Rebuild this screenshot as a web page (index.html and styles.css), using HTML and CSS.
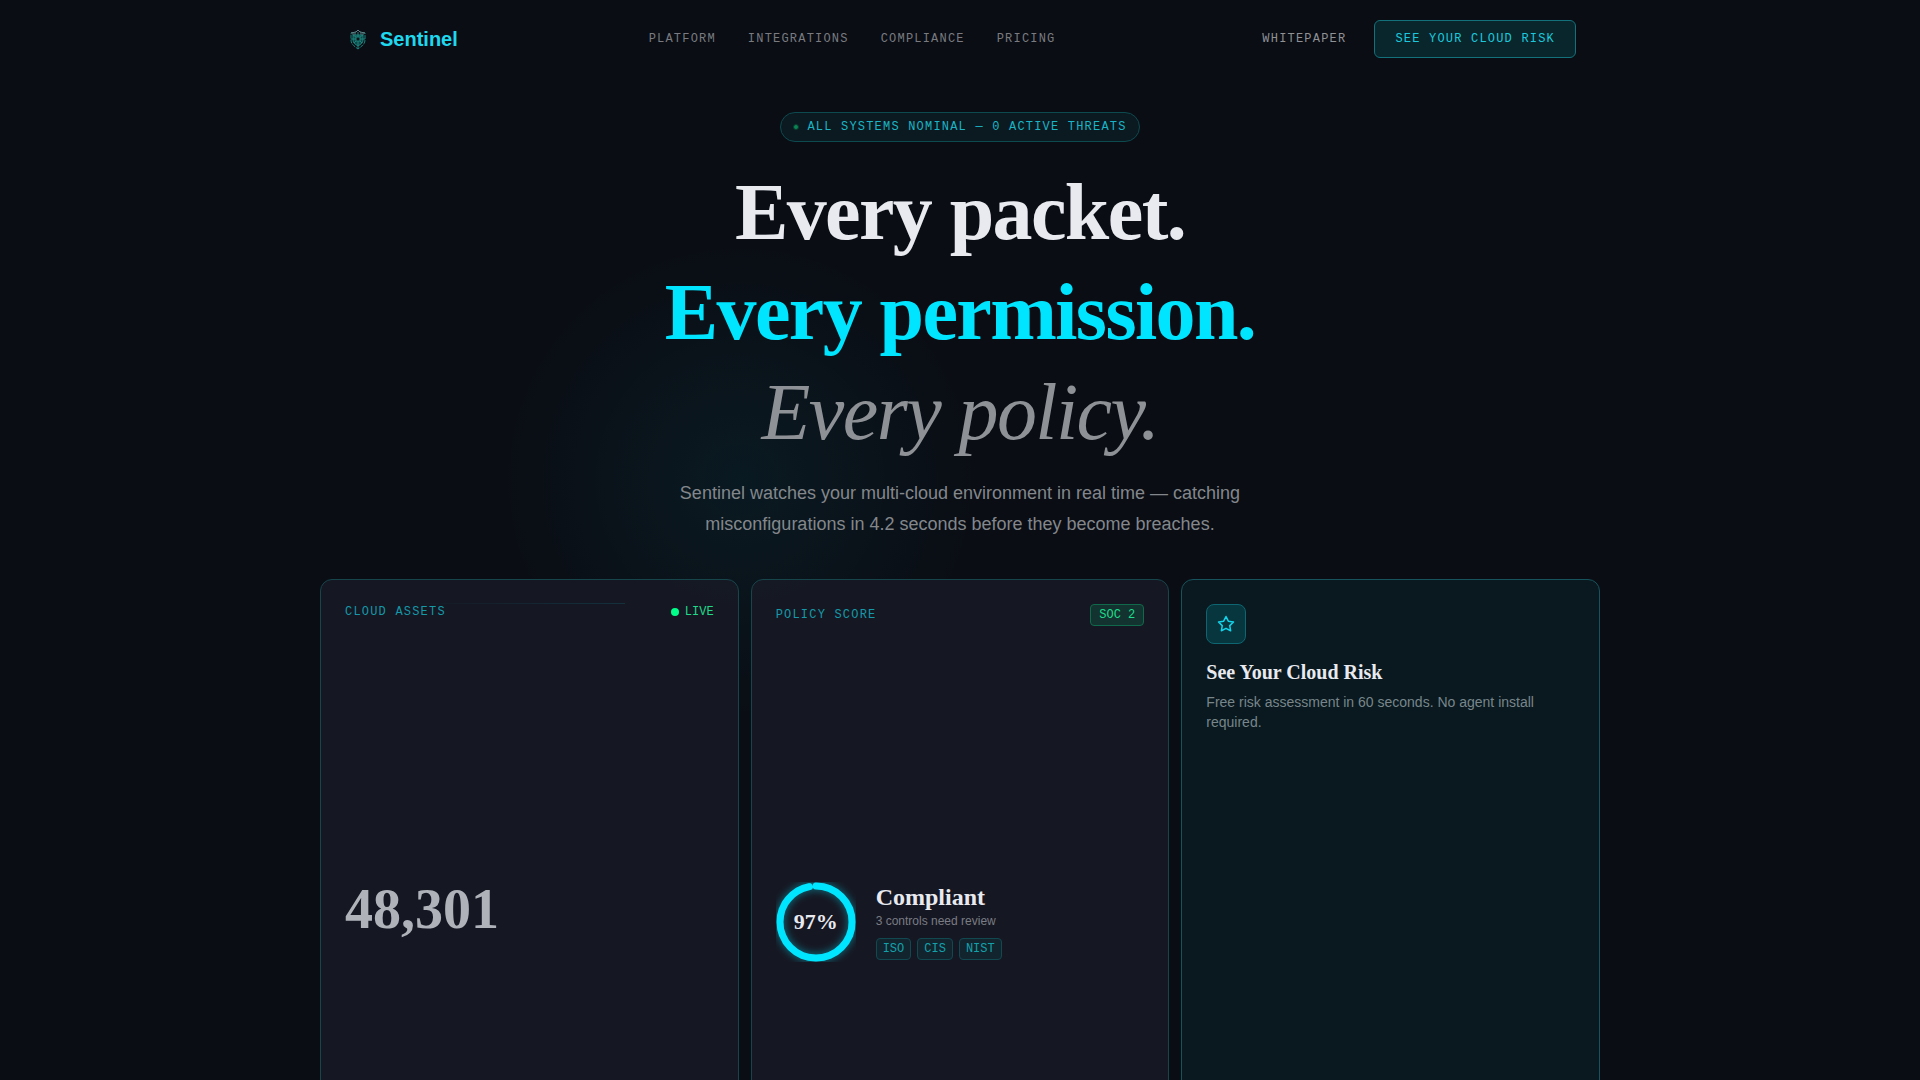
FILE: index.html
```html
<!DOCTYPE html>
<html lang="en">

<head>
  <meta charset="utf-8">
  <meta name="viewport" content="width=device-width, initial-scale=1">
  <title>Sentinel</title>
  <link rel="stylesheet" href="styles.css">
</head>

<body>
  <div class="glow"></div>

  <header class="nav">
    <a class="logo" href="#">
      <svg width="28" height="28" viewBox="0 0 28 28" fill="none" stroke="#1c857f" stroke-width="1">
        <path d="M14 5l2 2 5 1v7c0 4-3 6-7 9-4-3-7-5-7-9V8l5-1z" stroke-dasharray="4 1" />
        <path d="M7 8l5-1 2-2 2 2 5 1M8 9h4M16 9h4" stroke="#5f7d82" />
        <path d="M9 10h10v5c0 3-2 4-5 6-3-2-5-3-5-6z" fill="#0e4a4a" />
        <path d="M12 12h4v4h-4z" fill="#0a1218" />
        <path d="M14 7v5M14 16v7M7 14h5M16 14h5M9 10l3 2M19 10l-3 2M10 18l2-2M18 18l-2-2" />
      </svg>
      <span>Sentinel</span>
    </a>
    <nav class="links">
      <a href="#">PLATFORM</a>
      <a href="#">INTEGRATIONS</a>
      <a href="#">COMPLIANCE</a>
      <a href="#">PRICING</a>
    </nav>
    <div class="actions">
      <a class="whitepaper" href="#">WHITEPAPER</a>
      <button class="cta" type="button">SEE YOUR CLOUD RISK</button>
    </div>
  </header>

  <main>
    <section class="hero">
      <div class="status"><span class="status-dot"></span>ALL SYSTEMS NOMINAL — 0 ACTIVE THREATS</div>
      <h1>
        <span class="line">Every packet.</span>
        <span class="line cyan">Every permission.</span>
        <span class="line muted">Every policy.</span>
      </h1>
      <p>Sentinel watches your multi-cloud environment in real time — catching misconfigurations in 4.2 seconds before they become breaches.</p>
    </section>

    <section class="cards">
      <article class="card assets">
        <div class="scan"></div>
        <div class="card-head">
          <span class="label">CLOUD ASSETS</span>
          <span class="live"><span class="live-dot"></span>LIVE</span>
        </div>
        <div class="card-body">
          <div class="count">48,301</div>
        </div>
      </article>

      <article class="card">
        <div class="card-head">
          <span class="label">POLICY SCORE</span>
          <span class="tag green">SOC 2</span>
        </div>
        <div class="card-body">
          <div class="ring">
            <svg width="80" height="80" viewBox="0 0 80 80">
              <circle class="ring-track" cx="40" cy="40" r="36" />
              <circle class="ring-value" cx="40" cy="40" r="36" pathLength="100" transform="rotate(-90 40 40)" />
            </svg>
            <span class="ring-text">97%</span>
          </div>
          <div class="score">
            <h2>Compliant</h2>
            <p>3 controls need review</p>
            <div class="tags">
              <span class="tag">ISO</span>
              <span class="tag">CIS</span>
              <span class="tag">NIST</span>
            </div>
          </div>
        </div>
      </article>

      <article class="card risk">
        <div class="risk-icon">
          <svg width="18" height="18" viewBox="0 0 24 24" fill="none" stroke="currentColor" stroke-width="2" stroke-linejoin="round">
            <path d="M12 2l3.09 6.26L22 9.27l-5 4.87 1.18 6.88L12 17.77l-6.18 3.25L7 14.14 2 9.27l6.91-1.01z" />
          </svg>
        </div>
        <h3>See Your Cloud Risk</h3>
        <p>Free risk assessment in 60 seconds. No agent install required.</p>
      </article>
    </section>
  </main>
</body>

</html>
```
FILE: styles.css
```css
* { box-sizing: border-box; }
body { margin: 0; background: #0a0d14; color: #e8eaf0; font-family: "Liberation Sans", Arial, sans-serif; overflow-x: hidden; }
a { color: inherit; text-decoration: none; }
h1, h2, h3, p { margin: 0; }

.links, .actions, .status, .label, .live, .tag, .cta {
  font-family: "Liberation Mono", "Courier New", monospace;
  font-size: 12px;
  line-height: 18px;
}
.links, .actions, .status, .label, .cta { letter-spacing: 0.1em; }

/* soft light behind the hero, shows through the cards */
.glow {
  position: absolute;
  top: 180px;
  left: 440px;
  width: 600px;
  height: 600px;
  background: radial-gradient(circle closest-side, rgba(0, 229, 255, 0.06), transparent 80%);
  pointer-events: none;
}

.nav {
  position: relative;
  display: flex;
  justify-content: space-between;
  align-items: center;
  max-width: 1280px;
  margin: 0 auto;
  padding: 20px 24px;
}
.logo { display: flex; align-items: center; gap: 8px; color: #1fd8ee; font-size: 20px; font-weight: bold; }
.links { display: flex; gap: 32px; color: #797b80; }
.actions { display: flex; align-items: center; gap: 12px; }
.whitepaper { padding: 0 16px; color: #8f9195; }
.cta {
  padding: 9px 20px;
  border: 1px solid #12717a;
  border-radius: 6px;
  background: #09262d;
  color: #1cc9dc;
  cursor: pointer;
}

main { position: relative; max-width: 1280px; margin: 0 auto; }

.hero { display: flex; flex-direction: column; align-items: center; padding: 34px 24px 39px; text-align: center; }
.status {
  display: flex;
  align-items: center;
  gap: 8px;
  padding: 5px 12px;
  border: 1px solid #0d4a50;
  border-radius: 15px;
  background: #0a1a20;
  color: #1bb4c6;
}
.status-dot { width: 6px; height: 6px; border: 1px solid #0a3a2e; border-radius: 50%; background: #0b8352; }

.hero h1 {
  margin: 20px 0 16px;
  font-family: "Liberation Serif", "Times New Roman", serif;
  font-size: 80px;
  line-height: 100px;
  letter-spacing: -0.02em;
}
.line { display: block; }
.cyan { color: #00e5ff; }
.muted { color: #8e9195; font-weight: normal; font-style: italic; }
.hero p { max-width: 600px; color: #83878c; font-size: 18px; line-height: 31px; }

.cards { display: grid; grid-template-columns: repeat(3, 1fr); gap: 12px; padding-bottom: 80px; }
.card {
  position: relative;
  display: flex;
  flex-direction: column;
  min-height: 664px;
  padding: 24px;
  border: 1px solid #17454c;
  border-radius: 12px;
  background: rgba(23, 26, 36, 0.85);
}
.card-head { display: flex; justify-content: space-between; align-items: center; }
.label { color: #1598a8; }
.card-body { display: flex; flex: 1; align-items: center; gap: 20px; }

/* sweep line */
.scan {
  position: absolute;
  top: 23px;
  left: 20%;
  width: 53%;
  height: 1px;
  background: linear-gradient(90deg, transparent, rgba(0, 229, 255, 0.12));
}
.assets .card-head span { line-height: 16px; }
.assets .card-body { padding-bottom: 20px; }
.live { display: flex; align-items: center; gap: 6px; color: #20d989; }
.live-dot { width: 8px; height: 8px; border-radius: 50%; background: #00ff88; }
.count {
  color: #b0b2ba;
  font-family: "Liberation Serif", "Times New Roman", serif;
  font-size: 56px;
  font-weight: bold;
  line-height: 56px;
}

.ring { position: relative; width: 80px; height: 80px; }
.ring svg { display: block; }
.ring circle { fill: none; stroke-width: 7; }
.ring-track { stroke: #172832; }
.ring .ring-value {
  stroke: #00e5ff;
  stroke-dasharray: 97 100;
  stroke-linecap: round;
  filter: drop-shadow(0 0 4px rgba(0, 229, 255, 0.5));
}
.ring-text {
  position: absolute;
  inset: 0;
  display: flex;
  align-items: center;
  justify-content: center;
  font-family: "Liberation Serif", "Times New Roman", serif;
  font-size: 22px;
  font-weight: bold;
}
.score { padding-bottom: 2px; }
.score h2 { font-family: "Liberation Serif", "Times New Roman", serif; font-size: 24px; line-height: 30px; }
.score p { color: #7a7c84; font-size: 12px; line-height: 18px; }
.tags { display: flex; gap: 6px; margin-top: 8px; }
.tag { height: 22px; padding: 1px 6px; border: 1px solid #124850; border-radius: 4px; background: #12252f; color: #14a0aa; }
.tag.green { padding: 1px 8px; border-color: #10694a; background: #12332f; color: #1edc8c; }

.risk { border-color: #17535c; background: #09191f; }
.risk-icon {
  display: flex;
  align-items: center;
  justify-content: center;
  width: 40px;
  height: 40px;
  border: 1px solid #0d6671;
  border-radius: 8px;
  background: #08363f;
  color: #12d4ea;
}
.risk h3 { margin: 16px 0 8px; font-family: "Liberation Serif", "Times New Roman", serif; font-size: 20px; line-height: 24px; }
.risk p { color: #78868b; font-size: 14px; line-height: 20px; }
```
